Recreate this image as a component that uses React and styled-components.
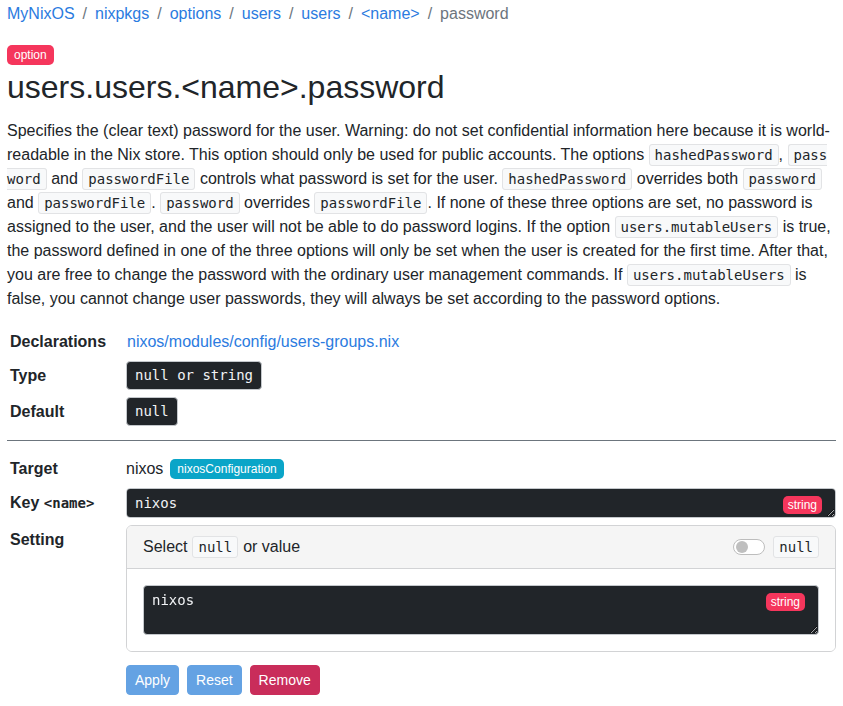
import React from "react";
import styled, { createGlobalStyle } from "styled-components";

const MONO = `"DejaVu Sans Mono", "Liberation Mono", monospace`;

const Global = createGlobalStyle`
  html, body { margin: 0; padding: 0; background: #fff; }
  body {
    font-family: "Liberation Sans", Arial, sans-serif;
    font-size: 16px;
    line-height: 24px;
    color: #212529;
  }
  * { box-sizing: border-box; }
`;

const Page = styled.div`
  padding: 2px 7px 10px 7px;
`;

const Crumbs = styled.nav`
  display: flex;
  flex-wrap: wrap;
  line-height: 24px;
`;

const Crumb = styled.span`
  color: ${(p) => (p.$active ? "#6c757d" : "#2b7be0")};
`;

const Divider = styled.span`
  color: #6c757d;
  padding: 0 8px;
`;

const CrumbLink = styled.a`
  color: #2b7be0;
  text-decoration: none;
`;

const Badge = styled.span`
  display: inline-block;
  font-size: 12px;
  line-height: 12px;
  padding: 4px 7px;
  border-radius: 5px;
  color: #fff;
  background: ${(p) => p.$bg};
  white-space: nowrap;
`;

const BadgeLine = styled.div`
  margin-top: 19px;
  line-height: 0;
`;

const Title = styled.h1`
  margin: 3px 0 13px 0;
  font-size: 32px;
  font-weight: 400;
  line-height: 38px;
`;

const Para = styled.p`
  margin: 0 0 16px 0;
`;

const Code = styled.code`
  font-family: ${MONO};
  font-size: 14px;
  line-height: 16px;
  padding: 2px 5px;
  background: #f8f9fa;
  border: 1px solid #e2e3e5;
  border-radius: 3px;
  color: #212529;
`;

const Grid = styled.div`
  display: grid;
  grid-template-columns: 119px 1fr;
  row-gap: 7px;
  align-items: start;
`;

const Label = styled.div`
  font-weight: 700;
  padding: 3px 0 0 3px;
  line-height: 24px;
`;

const LabelMono = styled.code`
  font-family: ${MONO};
  font-size: 14px;
  font-weight: 700;
`;

const ValueText = styled.div`
  padding-top: 3px;
  line-height: 24px;
  display: flex;
  align-items: center;
  gap: 7px;
`;

const ValueLink = styled.a`
  color: #2b7be0;
  text-decoration: none;
  padding-left: 1px;
`;

const DarkCode = styled.div`
  display: inline-block;
  justify-self: start;
  font-family: ${MONO};
  font-size: 14px;
  line-height: 21px;
  padding: 3px 8px;
  background: #212529;
  color: #f1f3f5;
  border: 1px solid #c4c8cc;
  border-radius: 4px;
`;

const Rule = styled.hr`
  border: 0;
  border-top: 1px solid #6c757d;
  margin: 14px 0 13px 0;
`;

const FieldWrap = styled.div`
  position: relative;
`;

const Area = styled.textarea`
  display: block;
  width: 100%;
  height: ${(p) => p.$h}px;
  margin: 0;
  font-family: ${MONO};
  font-size: 14px;
  line-height: 21px;
  padding: 4px 8px;
  background: #212529;
  color: #f1f3f5;
  border: 1px solid #c4c8cc;
  border-radius: 4px;
  resize: vertical;
  color-scheme: dark;
  outline: none;
`;

const FieldBadge = styled.span`
  position: absolute;
  top: 8px;
  right: 14px;
  font-size: 12px;
  line-height: 12px;
  padding: 3px 5px;
  border-radius: 5px;
  color: #fff;
  background: #f5365c;
`;

const Card = styled.div`
  border: 1px solid #d2d3d5;
  border-radius: 6px;
  overflow: hidden;
`;

const CardHeader = styled.div`
  display: flex;
  align-items: center;
  justify-content: space-between;
  padding: 9px 16px;
  background: #f5f5f5;
  border-bottom: 1px solid #d2d3d5;
  line-height: 24px;
`;

const HeaderLeft = styled.div`
  display: flex;
  align-items: center;
  gap: 5px;
`;

const HeaderRight = styled.div`
  display: flex;
  align-items: center;
  gap: 8px;
`;

const Switch = styled.span`
  display: inline-flex;
  align-items: center;
  width: 32px;
  height: 16px;
  border: 1px solid #bdbdbd;
  border-radius: 8px;
  background: #fff;
  padding-left: 2px;
`;

const Knob = styled.span`
  width: 12px;
  height: 12px;
  border-radius: 50%;
  background: #bfbfbf;
`;

const CardBody = styled.div`
  padding: 16px;
  background: #fff;
`;

const Buttons = styled.div`
  display: flex;
  gap: 8px;
  margin-top: 6px;
`;

const Btn = styled.button`
  font-family: "Liberation Sans", Arial, sans-serif;
  font-size: 14px;
  line-height: 20px;
  padding: 4px 8px;
  border: 1px solid ${(p) => p.$bg};
  background: ${(p) => p.$bg};
  color: #fff;
  border-radius: 4px;
  cursor: pointer;
`;

export default function App() {
  const crumbs = ["MyNixOS", "nixpkgs", "options", "users", "users", "<name>"];
  return (
    <>
      <Global />
      <Page>
        <Crumbs>
          {crumbs.map((c, i) => (
            <React.Fragment key={i}>
              <Crumb>
                <CrumbLink href="#">{c}</CrumbLink>
              </Crumb>
              <Divider>/</Divider>
            </React.Fragment>
          ))}
          <Crumb $active>password</Crumb>
        </Crumbs>

        <BadgeLine>
          <Badge $bg="#f5365c">option</Badge>
        </BadgeLine>
        <Title>users.users.&lt;name&gt;.password</Title>

        <Para>
          Specifies the (clear text) password for the user. Warning: do not set
          confidential information here because it is world-readable in the Nix
          store. This option should only be used for public accounts. The
          options <Code>hashedPassword</Code>,{" "}
          <Code>
            pass<wbr />word
          </Code>{" "}
          and <Code>passwordFile</Code> controls what password is set for the
          user. <Code>hashedPassword</Code> overrides both <Code>password</Code>{" "}
          and <Code>passwordFile</Code>. <Code>password</Code> overrides{" "}
          <Code>passwordFile</Code>. If none of these three options are set, no
          password is assigned to the user, and the user will not be able to do
          password logins. If the option <Code>users.mutableUsers</Code> is
          true, the password defined in one of the three options will only be
          set when the user is created for the first time. After that, you are
          free to change the password with the ordinary user management
          commands. If <Code>users.mutableUsers</Code> is false, you cannot
          change user passwords, they will always be set according to the
          password options.
        </Para>

        <Grid>
          <Label>Declarations</Label>
          <ValueText>
            <ValueLink href="#">nixos/modules/config/users-groups.nix</ValueLink>
          </ValueText>
          <Label>Type</Label>
          <DarkCode>null or string</DarkCode>
          <Label>Default</Label>
          <DarkCode>null</DarkCode>
        </Grid>

        <Rule />

        <Grid>
          <Label>Target</Label>
          <ValueText>
            <span>nixos</span>
            <Badge $bg="#0aa5c8">nixosConfiguration</Badge>
          </ValueText>

          <Label>
            Key <LabelMono>&lt;name&gt;</LabelMono>
          </Label>
          <FieldWrap>
            <Area $h={30} readOnly value="nixos" />
            <FieldBadge>string</FieldBadge>
          </FieldWrap>

          <Label>Setting</Label>
          <Card>
            <CardHeader>
              <HeaderLeft>
                <span>Select</span>
                <Code>null</Code>
                <span>or value</span>
              </HeaderLeft>
              <HeaderRight>
                <Switch>
                  <Knob />
                </Switch>
                <Code>null</Code>
              </HeaderRight>
            </CardHeader>
            <CardBody>
              <FieldWrap>
                <Area $h={50} readOnly value="nixos" />
                <FieldBadge>string</FieldBadge>
              </FieldWrap>
            </CardBody>
          </Card>

          <div />
          <Buttons>
            <Btn $bg="#64a2e3">Apply</Btn>
            <Btn $bg="#64a2e3">Reset</Btn>
            <Btn $bg="#c92d5a">Remove</Btn>
          </Buttons>
        </Grid>
      </Page>
    </>
  );
}
